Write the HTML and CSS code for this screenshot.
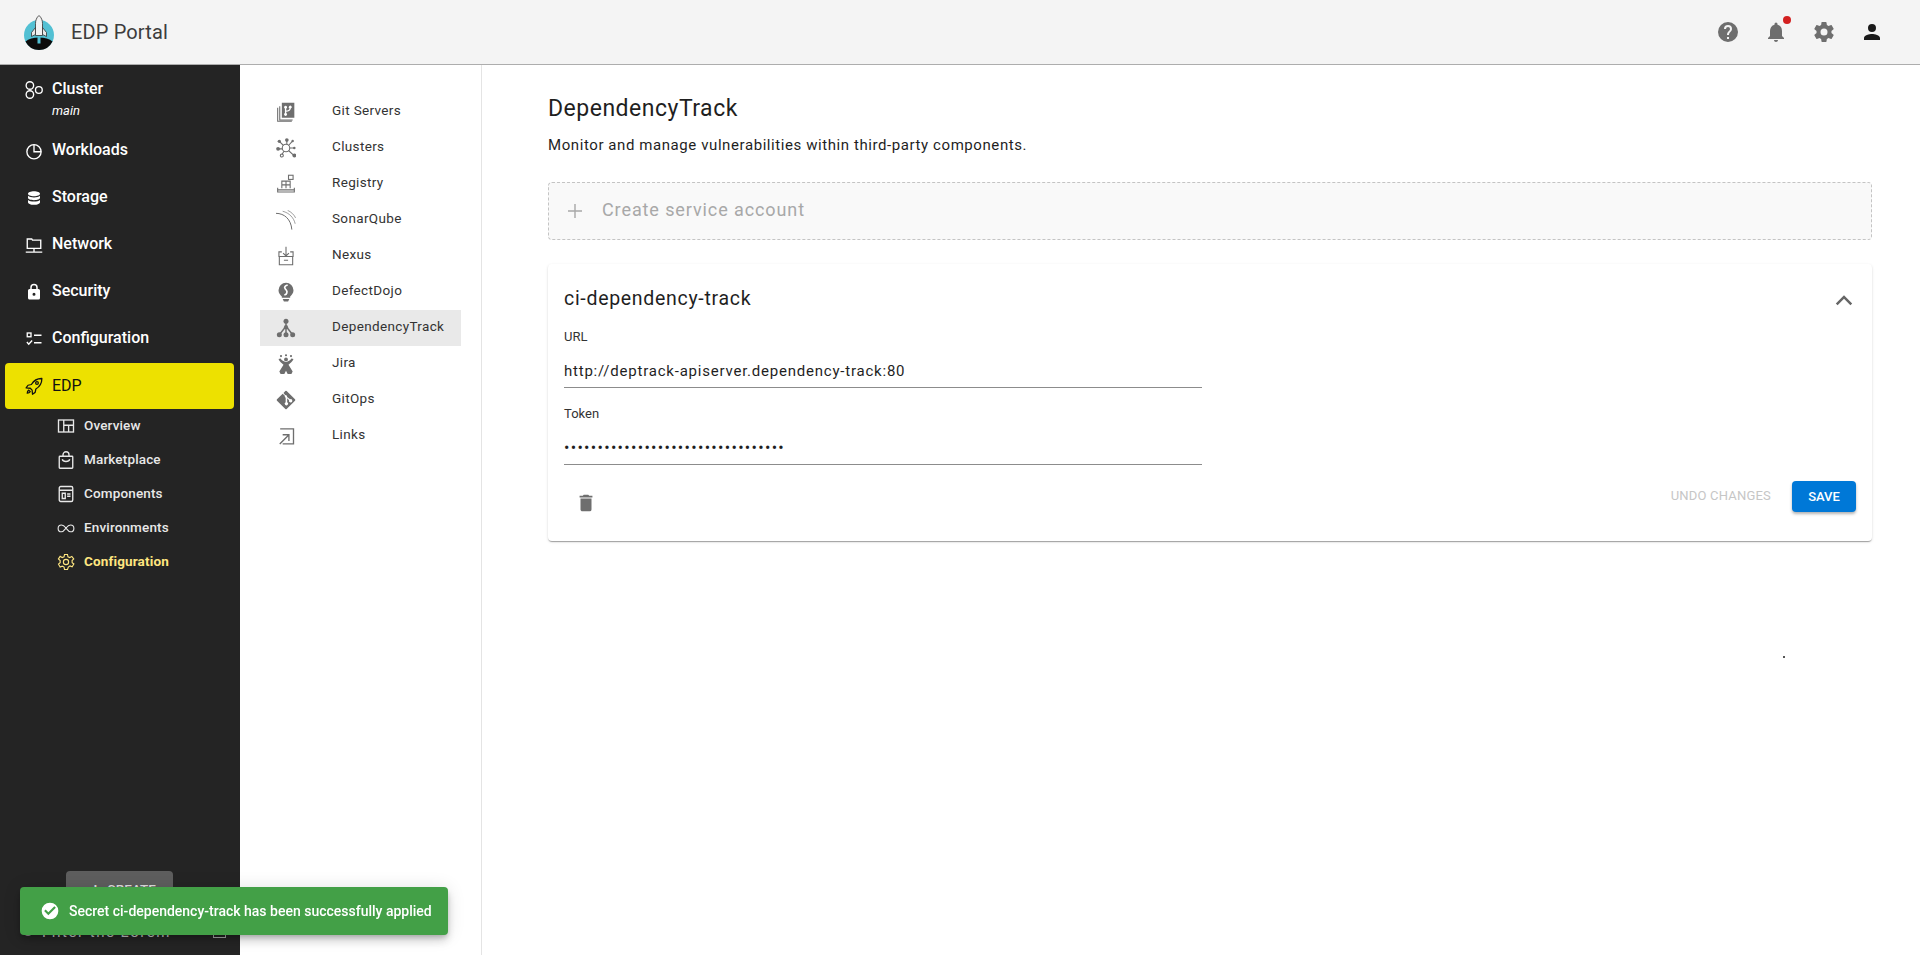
FILE: index.html
```html
<!DOCTYPE html>
<html lang="en">
<head>
  <meta charset="UTF-8">
  <meta name="viewport" content="width=device-width, initial-scale=1">
  <title>EDP Portal</title>
  <link rel="stylesheet" href="styles.css">
</head>
<body>

  <header class="topbar">
    <svg class="logo" viewBox="0 0 32 36" width="32" height="37">
      <circle cx="16" cy="20.5" r="15" fill="#52c0d3"/>
      <path d="M2.5 27c3-2.500 8-4 13.500-4s10.500 1.500 13.500 4a15 15 0 0 1-27 0z" fill="#0c0c0c"/>
      <rect x="14.500" y="21" width="3" height="8" fill="#52c0d3"/>
      <path d="M16 1c2.500 2 3.500 5 3.500 8v12h-7V9c0-3 1-6 3.500-8z" fill="#f2f2f2" stroke="#333" stroke-width=".8"/>
      <path d="M12.500 13l-4 5v4l4-2zM19.500 13l4 5v4l-4-2z" fill="#e8e8e8" stroke="#333" stroke-width=".8"/>
    </svg>
    <span class="brand">EDP Portal</span>
    <div class="top-actions">
      <svg class="top-icon" viewBox="0 0 24 24"><path fill="#6e6e6e" d="M12 2a10 10 0 1 0 0 20 10 10 0 0 0 0-20zm1 17h-2v-2h2v2zm2.070-7.750l-.9.920C13.450 12.900 13 13.500 13 15h-2v-.5c0-1.100.45-2.100 1.170-2.830l1.240-1.260c.37-.36.590-.86.590-1.410a2 2 0 0 0-4 0H8a4 4 0 0 1 8 0c0 .88-.36 1.680-.93 2.250z"/></svg>
      <div class="bell">
        <svg class="top-icon" viewBox="0 0 24 24"><path fill="#6e6e6e" d="M12 22c1.100 0 2-.9 2-2h-4c0 1.100.9 2 2 2zm6-6v-5c0-3.070-1.630-5.640-4.500-6.320V4a1.500 1.500 0 0 0-3 0v.68C7.640 5.360 6 7.920 6 11v5l-2 2v1h16v-1l-2-2z"/></svg>
        <span class="bell-dot"></span>
      </div>
      <svg class="top-icon" viewBox="0 0 24 24"><path fill="#6e6e6e" d="M19.430 12.980c.04-.32.070-.64.070-.98s-.03-.66-.07-.98l2.110-1.650c.19-.15.240-.42.120-.64l-2-3.460c-.12-.22-.39-.3-.61-.22l-2.490 1c-.52-.4-1.080-.73-1.690-.98l-.38-2.650A.488.488 0 0 0 14 2h-4c-.25 0-.46.180-.49.420l-.38 2.650c-.61.250-1.170.590-1.690.98l-2.490-1c-.23-.09-.49 0-.61.220l-2 3.460c-.13.220-.07.490.12.640l2.110 1.650c-.04.320-.07.650-.07.980s.03.660.07.980l-2.110 1.650c-.19.150-.24.420-.12.640l2 3.460c.12.220.39.300.61.220l2.490-1c.52.400 1.080.730 1.690.980l.38 2.650c.03.240.24.420.49.420h4c.25 0 .46-.18.49-.42l.38-2.650c.61-.25 1.170-.59 1.690-.98l2.490 1c.23.090.49 0 .61-.22l2-3.460c.12-.22.070-.49-.12-.64l-2.110-1.650zM12 15.500a3.500 3.500 0 1 1 0-7 3.500 3.500 0 0 1 0 7z"/></svg>
      <svg class="top-icon" viewBox="0 0 24 24"><path fill="#1a1a1a" d="M12 12a4 4 0 1 0 0-8 4 4 0 0 0 0 8zm0 2c-2.670 0-8 1.340-8 4v2h16v-2c0-2.660-5.330-4-8-4z"/></svg>
    </div>
  </header>

  <div class="layout">
    <aside class="sidebar">
      <a class="side-item side-cluster">
        <svg class="side-icon" viewBox="0 0 24 24" fill="none" stroke="#fff" stroke-width="1.800"><circle cx="6.500" cy="6" r="5"/><circle cx="6.500" cy="18" r="5"/><circle cx="18.500" cy="12" r="4.500"/></svg>
        <span class="side-label">Cluster<em class="side-sub">main</em></span>
      </a>
      <a class="side-item">
        <svg class="side-icon" viewBox="0 0 24 24" fill="none" stroke="#fff" stroke-width="1.800"><circle cx="12" cy="13" r="9.500"/><path d="M12 3.500V13h9.500" /></svg>
        <span class="side-label">Workloads</span>
      </a>
      <a class="side-item">
        <svg class="side-icon" viewBox="0 0 24 24"><path fill="#fff" d="M12 3c-4.400 0-8 1.300-8 3.200S7.600 9.500 12 9.500s8-1.400 8-3.300S16.400 3 12 3zM4 9v2.800c0 1.900 3.600 3.200 8 3.200s8-1.300 8-3.200V9c-1.500 1.500-4.700 2.200-8 2.200S5.500 10.500 4 9zm0 5.500v3c0 1.900 3.600 3.500 8 3.500s8-1.600 8-3.500v-3c-1.500 1.500-4.700 2.200-8 2.200s-6.500-.7-8-2.200z"/></svg>
        <span class="side-label">Storage</span>
      </a>
      <a class="side-item">
        <svg class="side-icon" viewBox="0 0 24 24" fill="none" stroke="#fff" stroke-width="1.800"><path d="M3 4h6l1 1.500h11v11H3z"/><path d="M12 16.500v5M1 21.500h22"/></svg>
        <span class="side-label">Network</span>
      </a>
      <a class="side-item">
        <svg class="side-icon" viewBox="0 0 24 24"><path fill="#fff" fill-rule="evenodd" d="M18 8h-1V6A5 5 0 0 0 7 6v2H6a2 2 0 0 0-2 2v10c0 1.100.9 2 2 2h12a2 2 0 0 0 2-2V10a2 2 0 0 0-2-2zM9 6a3 3 0 0 1 6 0v2H9V6zm3 11a2 2 0 1 1 0-4 2 2 0 0 1 0 4z"/></svg>
        <span class="side-label">Security</span>
      </a>
      <a class="side-item">
        <svg class="side-icon" viewBox="0 0 24 24" fill="none" stroke="#fff" stroke-width="1.800"><rect x="3" y="4" width="5" height="5"/><path d="M12 7h10M12 17h10M2.500 16l2.500 3 4.500-5"/></svg>
        <span class="side-label">Configuration</span>
      </a>
      <a class="side-item side-active">
        <svg class="side-icon" viewBox="0 0 24 24" fill="none" stroke="#111" stroke-width="1.700" stroke-linejoin="round"><path d="M22 2c-6 0-10.500 3-13.500 8L4 11 1.500 14.500 7 15l2.500 2.500.5 5.500 3.500-2.500 1-4.500c5-3 8-7.500 8-14z"/><circle cx="16" cy="8" r="1.800"/><path d="M5 17.500c-1.500 1-2 3-2 4 1 0 3-.5 4-2z"/></svg>
        <span class="side-label">EDP</span>
      </a>
      <nav class="sub-nav">
        <a class="sub-item">
          <svg class="sub-icon" viewBox="0 0 24 24" fill="none" stroke="#e8e8e8" stroke-width="1.800"><rect x="2" y="4" width="20" height="16"/><path d="M9 4v16M9 11h13M15.500 11v9"/></svg>
          Overview
        </a>
        <a class="sub-item">
          <svg class="sub-icon" viewBox="0 0 24 24" fill="none" stroke="#e8e8e8" stroke-width="1.800"><rect x="3" y="7" width="18" height="16" rx="1"/><path d="M8 7V5a4 4 0 0 1 8 0v2M7 11c1 4 9 4 10 0"/></svg>
          Marketplace
        </a>
        <a class="sub-item">
          <svg class="sub-icon" viewBox="0 0 24 24" fill="none" stroke="#e8e8e8" stroke-width="1.800"><rect x="3" y="2" width="18" height="20" rx="2"/><path d="M3 7h18M7 11h4v7H7zM13.500 12H18M13.500 15H18"/></svg>
          Components
        </a>
        <a class="sub-item">
          <svg class="sub-icon" viewBox="0 0 24 24" fill="none" stroke="#e8e8e8" stroke-width="1.500"><path d="M12 12c-2-2.500-3.500-4-6-4a4.500 4.500 0 0 0 0 9c2.500 0 4-2.500 6-5zm0 0c2 2.500 3.500 5 6 5a4.500 4.500 0 0 0 0-9c-2.500 0-4 1.500-6 4z"/></svg>
          Environments
        </a>
        <a class="sub-item sub-active">
          <svg class="sub-icon" viewBox="0 0 24 24" fill="none" stroke="#ffe680" stroke-width="1.500"><path d="M10 2h4l.6 3 2.500 1.100L19.800 4.500l2.500 3.500-2.200 2 .1 2.800 2.300 1.800-2.300 3.700-2.800-1.100-2.300 1.500L14 22h-4l-.6-3.200-2.400-1.300-2.800 1.100-2.200-3.700 2.200-1.900V10L1.900 8l2.300-3.500 2.700 1.600L9.400 5z"/><circle cx="12" cy="12" r="3.500"/></svg>
          Configuration
        </a>
      </nav>
      <div class="side-foot">
        <button class="create-btn"><span class="create-plus">+</span>CREATE</button>
        <div class="filter-row">
          <span class="filter-dot"></span>
          <span class="filter-text">Filter the Lorem</span>
          <span class="filter-box"></span>
        </div>
      </div>
    </aside>

    <nav class="sections">
      <a class="section-item">
        <svg class="section-icon" viewBox="0 0 24 24"><path fill="#6e6e6e" fill-rule="evenodd" d="M7 1h15v18H7zm4.500 3.500a1.800 1.800 0 0 0-.8 3.400v5.200a1.800 1.800 0 1 0 1.600 0v-1.300c2.800-.3 5-1.200 5.500-3.900a1.800 1.800 0 1 0-1.600-.1c-.4 1.700-2 2.300-3.900 2.500V7.900a1.800 1.800 0 0 0-.8-3.400z"/><path fill="none" stroke="#6e6e6e" stroke-width="1.300" d="M4.500 5v16.500H20M2 7v16h17"/></svg>
        <span class="section-label">Git Servers</span>
      </a>
      <a class="section-item">
        <svg class="section-icon" viewBox="0 0 24 24"><g fill="#6e6e6e"><circle cx="4" cy="4" r="2"/><circle cx="13" cy="2.500" r="2.200"/><circle cx="2.500" cy="13" r="2.300"/><circle cx="22" cy="12" r="1.500"/><circle cx="22" cy="21" r="2.300"/></g><g fill="none" stroke="#6e6e6e" stroke-width="1.300"><circle cx="12" cy="12" r="4.500"/><circle cx="7" cy="21" r="1.800"/><circle cx="20" cy="3.500" r=".8"/><path d="M4 4l5 5M13 2.500V7.500M2.500 13H7.500M16.500 12H22M15 15l6 5.500M9.500 16L7 20M15 9l4.500-5"/></g></svg>
        <span class="section-label">Clusters</span>
      </a>
      <a class="section-item">
        <svg class="section-icon" viewBox="0 0 24 24" fill="none" stroke="#6e6e6e" stroke-width="1.300"><path d="M2 16.500v5h20v-5"/><path d="M2 19h20M7 17V8.500h10V17M12 8.500V17M7 13h10"/><rect x="15" y="1.500" width="5.500" height="5"/></svg>
        <span class="section-label">Registry</span>
      </a>
      <a class="section-item">
        <svg class="section-icon" viewBox="0 0 24 24" fill="none" stroke="#6e6e6e"><path stroke-width="1.200" d="M0 4c10 0 18 7 19 19.500"/><path stroke-width=".8" d="M8 1.500c8 2 13.500 8 15 15"/><path stroke-width=".8" d="M14 .5c4 1.500 8 5.500 9.500 9"/></svg>
        <span class="section-label">SonarQube</span>
      </a>
      <a class="section-item">
        <svg class="section-icon" viewBox="0 0 24 24" fill="none" stroke="#6e6e6e" stroke-width="1.300"><path d="M12 1v11M8.500 8.500L12 12l3.500-3.500"/><path d="M7 7H3.500v5.500h17V7H17M4 12.500v10h16v-10M9.500 17h5"/></svg>
        <span class="section-label">Nexus</span>
      </a>
      <a class="section-item">
        <svg class="section-icon" viewBox="0 0 24 24"><path fill="#6e6e6e" d="M12 1a9 9 0 0 0-9 9c0 3.500 2 5.500 4 7.500V19h10v-1.500c2-2 4-4 4-7.500a9 9 0 0 0-9-9zM8 20.500h8l-1.500 3h-5z"/><path fill="none" stroke="#fff" stroke-width="2" d="M14 3.500c-3 1-4.500 2.500-3 4.500s3 2.500 2 5-1.500 2-3 2.500"/></svg>
        <span class="section-label">DefectDojo</span>
      </a>
      <a class="section-item section-active">
        <svg class="section-icon" viewBox="0 0 24 24"><g fill="none" stroke="#6e6e6e" stroke-width="1.800"><path d="M12 4v8M12 10L4 20M12 10l8 10M12 12v8"/></g><g fill="#6e6e6e"><circle cx="12" cy="4" r="3"/><circle cx="12" cy="11" r="2.500"/><circle cx="4" cy="20" r="3"/><circle cx="12" cy="20" r="3"/><circle cx="20" cy="20" r="3"/></g></svg>
        <span class="section-label">DependencyTrack</span>
      </a>
      <a class="section-item">
        <svg class="section-icon" viewBox="0 0 24 24"><g fill="#6e6e6e"><circle cx="6" cy="2.500" r="1.300"/><circle cx="12" cy="1.500" r="1.300"/><circle cx="18" cy="2.500" r="1.300"/><circle cx="12" cy="6.500" r="2.300"/><path d="M3 6c1 3 4 5 6 7l-5 8 1.500 3H10l2-4 2 4h4.500L20 21l-5-8c2-2 5-4 6-7l-2.500-.5c-1 2-4 4-6.500 4S6.500 7.500 5.500 5.500z"/></g></svg>
        <span class="section-label">Jira</span>
      </a>
      <a class="section-item">
        <svg class="section-icon" viewBox="0 0 24 24"><path fill="#6e6e6e" d="M12.800 1.200l10 10a1.100 1.100 0 0 1 0 1.600l-10 10a1.100 1.100 0 0 1-1.600 0L1.200 12.800a1.100 1.100 0 0 1 0-1.600L8 4.400l2.600 2.600a2 2 0 0 0 1 2.400v5.200a2 2 0 1 0 1.800 0V10l2.300 2.300a2 2 0 1 0 1.200-1.200L13.300 8.400a2 2 0 0 0-2.400-2.400L9 3.600l2.200-2.400a1.100 1.100 0 0 1 1.600 0z"/></svg>
        <span class="section-label">GitOps</span>
      </a>
      <a class="section-item">
        <svg class="section-icon" viewBox="0 0 24 24" fill="none" stroke="#6e6e6e" stroke-width="1.600"><path d="M5 3.500h16v18H8M4.500 21.500L15 11M8 10.500h7.500V18"/></svg>
        <span class="section-label">Links</span>
      </a>
    </nav>

    <main class="content">
      <h1 class="page-title">DependencyTrack</h1>
      <p class="page-desc">Monitor and manage vulnerabilities within third-party components.</p>

      <div class="create-account">
        <svg class="plus-icon" viewBox="0 0 24 24" width="24" height="24"><path fill="#a8a8a8" d="M19 12.700h-6.300V19h-1.400v-6.300H5v-1.400h6.300V5h1.400v6.300H19z"/></svg>
        <span>Create service account</span>
      </div>

      <section class="card">
        <div class="card-head">
          <h2 class="card-title">ci-dependency-track</h2>
          <svg class="chevron" viewBox="0 0 24 24" width="28" height="28"><path fill="#666" d="M12 8l-7 7 1.500 1.500L12 11l5.500 5.500L19 15z"/></svg>
        </div>
        <div class="field">
          <label class="field-label">URL</label>
          <div class="field-value">http://deptrack-apiserver.dependency-track:80</div>
        </div>
        <div class="field">
          <label class="field-label">Token</label>
          <div class="field-value field-dots">•••••••••••••••••••••••••••••••••</div>
        </div>
        <div class="card-actions">
          <svg class="trash" viewBox="0 0 24 24" width="22" height="22"><path fill="#6e6e6e" d="M6 19c0 1.100.9 2 2 2h8a2 2 0 0 0 2-2V7H6v12zM19 4h-3.500l-1-1h-5l-1 1H5v2h14V4z"/></svg>
          <div class="action-buttons">
            <span class="undo">UNDO CHANGES</span>
            <button class="save">SAVE</button>
          </div>
        </div>
      </section>
      <span class="stray-dot"></span>
    </main>
  </div>

  <div class="toast">
    <svg viewBox="0 0 24 24" width="20" height="20"><path fill="#fff" d="M12 2a10 10 0 1 0 0 20 10 10 0 0 0 0-20zm-2 15l-5-5 1.800-1.800L10 13.400l7.200-7.200L19 8z"/></svg>
    <span>Secret ci-dependency-track has been successfully applied</span>
  </div>

</body>
</html>
```

FILE: styles.css
```css
* {
  box-sizing: border-box;
}

html, body {
  height: 100%;
}

body {
  margin: 0;
  font-family: "Roboto", "Liberation Sans", sans-serif;
  color: #1f1f1f;
  background: #fff;
  overflow: hidden;
}

.topbar {
  height: 65px;
  display: flex;
  align-items: center;
  background: #f4f4f4;
  border-bottom: 1px solid #adadad;
  padding: 0 36px 0 23px;
}

.logo {
  margin-right: 16px;
}

.brand {
  font-size: 20px;
  color: #3c3c3c;
  letter-spacing: 0.15px;
}

.top-actions {
  margin-left: auto;
  display: flex;
  align-items: center;
  gap: 24px;
}

.top-icon {
  width: 24px;
  height: 24px;
  display: block;
}

.bell {
  position: relative;
}

.bell-dot {
  position: absolute;
  top: -4px;
  right: -3px;
  width: 8px;
  height: 8px;
  border-radius: 50%;
  background: #d32020;
}

.layout {
  display: flex;
  height: calc(100% - 65px);
}

.sidebar {
  position: relative;
  width: 240px;
  flex: none;
  background: #242424;
  color: #fff;
  padding: 0 6px 0 5px;
  display: flex;
  flex-direction: column;
}

.side-item {
  height: 47px;
  display: flex;
  align-items: center;
  padding: 0 0 2px 20px;
  font-size: 16px;
  font-weight: 500;
  gap: 9px;
  flex: none;
}

.side-icon {
  width: 18px;
  height: 18px;
  flex: none;
  margin-top: 2px;
}

.side-cluster {
  height: 62px;
  padding-top: 2px;
  align-items: flex-start;
}

.side-cluster .side-icon {
  margin-top: 14px;
}

.side-cluster .side-label {
  padding-top: 12px;
}

.side-sub {
  display: block;
  font-size: 13px;
  font-weight: 400;
  margin-top: 5px;
}

.side-active {
  height: 46px;
  margin-top: 1px;
  background: #ede100;
  color: #111;
  border-radius: 4px;
  font-weight: 400;
}

.sub-nav {
  padding: 0 0 0 52px;
}

.sub-item {
  height: 34px;
  display: flex;
  align-items: center;
  gap: 9px;
  padding-bottom: 2px;
  font-size: 13.500px;
  font-weight: 500;
  letter-spacing: 0.15px;
  color: #e8e8e8;
}

.sub-icon {
  width: 18px;
  height: 18px;
  flex: none;
  margin-top: 2px;
}

.sub-active {
  color: #ffe680;
  font-weight: 700;
}

.side-foot {
  margin-top: auto;
  padding-bottom: 11px;
}

.create-btn {
  display: flex;
  align-items: center;
  margin: 0 0 13px 61px;
  width: 107px;
  height: 36px;
  padding: 0 0 0 18px;
  border: none;
  border-radius: 4px;
  background: #5e5e5e;
  color: #ddd;
  font: 500 13.500px "Roboto", sans-serif;
}

.create-plus {
  width: 23px;
  font-size: 16px;
}

.filter-row {
  display: flex;
  align-items: center;
  padding-left: 19px;
  gap: 10px;
  height: 24px;
  font-size: 15px;
  letter-spacing: 1.5px;
  color: #ccc;
}

.filter-dot {
  width: 8px;
  height: 8px;
  flex: none;
  border-radius: 50%;
  background: #999;
}

.filter-box {
  width: 13px;
  height: 12px;
  border: 1px solid #aaa;
  margin-left: auto;
  margin-right: 8px;
}

.sections {
  width: 242px;
  flex: none;
  padding: 29px 20px 0;
  border-right: 1px solid #e4e4e4;
}

.section-item {
  height: 36px;
  display: flex;
  align-items: center;
  font-size: 13.500px;
  color: #333;
  padding-left: 16px;
  letter-spacing: 0.35px;
}

.section-icon {
  width: 20px;
  height: 20px;
  flex: none;
  margin-right: 36px;
}

.section-label {
  padding-bottom: 4px;
}

.section-active {
  background: #e9e9e9;
}

.content {
  position: relative;
  flex: 1;
  padding: 29px 48px 0 66px;
}

.page-title {
  margin: 0;
  font-size: 23px;
  font-weight: 400;
  line-height: 30px;
  letter-spacing: 0.5px;
}

.page-desc {
  margin: 11px 0 0;
  font-size: 15px;
  line-height: 20px;
  letter-spacing: 0.58px;
}

.create-account {
  margin-top: 27px;
  height: 58px;
  display: flex;
  align-items: center;
  gap: 15px;
  padding: 0 0 3px 14px;
  background: #f9f9f9;
  border: 1px dashed #c4c4c4;
  border-radius: 4px;
  font-size: 18px;
  color: #a8a8a8;
  letter-spacing: 0.9px;
}

.plus-icon {
  margin-top: 3px;
}

.card {
  margin-top: 24px;
  height: 277px;
  padding: 16px;
  border-radius: 4px;
  background: #fff;
  box-shadow: 0 2px 1px -1px rgba(0,0,0,0.2), 0 1px 1px rgba(0,0,0,0.14), 0 1px 3px rgba(0,0,0,0.12);
}

.card-head {
  display: flex;
  justify-content: space-between;
  align-items: center;
  height: 36px;
}

.card-title {
  margin: 0;
  font-size: 19.500px;
  font-weight: 400;
  letter-spacing: 0.7px;
}

.chevron {
  margin-right: -2px;
  margin-top: 4px;
}

.field {
  width: 638px;
  margin-top: 11px;
}

.field + .field {
  margin-top: 16px;
}

.field-label {
  display: block;
  font-size: 13px;
  line-height: 18px;
  padding-top: 1px;
  height: 19px;
  color: #333;
}

.field-value {
  height: 35px;
  margin-top: 7px;
  border-bottom: 1px solid #8c8c8c;
  font-size: 15px;
  line-height: 36px;
  letter-spacing: 0.78px;
}

.field-dots {
  font-size: 16px;
  letter-spacing: 1.3px;
}

.card-actions {
  display: flex;
  justify-content: space-between;
  align-items: flex-start;
  margin-top: 16px;
}

.trash {
  margin: 11px 0 0 11px;
}

.action-buttons {
  display: flex;
  align-items: center;
  gap: 21px;
}

.undo {
  font-size: 13px;
  font-weight: 400;
  letter-spacing: 0.2px;
  padding-bottom: 2px;
  color: #c6c6c6;
}

.save {
  width: 64px;
  height: 31px;
  padding-bottom: 2px;
  border: none;
  border-radius: 4px;
  background: #0078d7;
  color: #fff;
  font: 500 13px "Roboto", sans-serif;
  box-shadow: 0 2px 3px rgba(0,0,0,0.3);
}

.stray-dot {
  position: absolute;
  left: 1301px;
  top: 591px;
  width: 2px;
  height: 2px;
  background: #555;
}

.toast {
  position: fixed;
  left: 20px;
  top: 887px;
  width: 428px;
  height: 48px;
  display: flex;
  align-items: center;
  gap: 9px;
  padding-left: 20px;
  background: #43a047;
  color: #fff;
  border-radius: 4px;
  font-size: 14px;
  font-weight: 500;
  box-shadow: 0 3px 5px -1px rgba(0,0,0,0.2), 0 6px 10px rgba(0,0,0,0.14), 0 1px 18px rgba(0,0,0,0.12);
}
```
